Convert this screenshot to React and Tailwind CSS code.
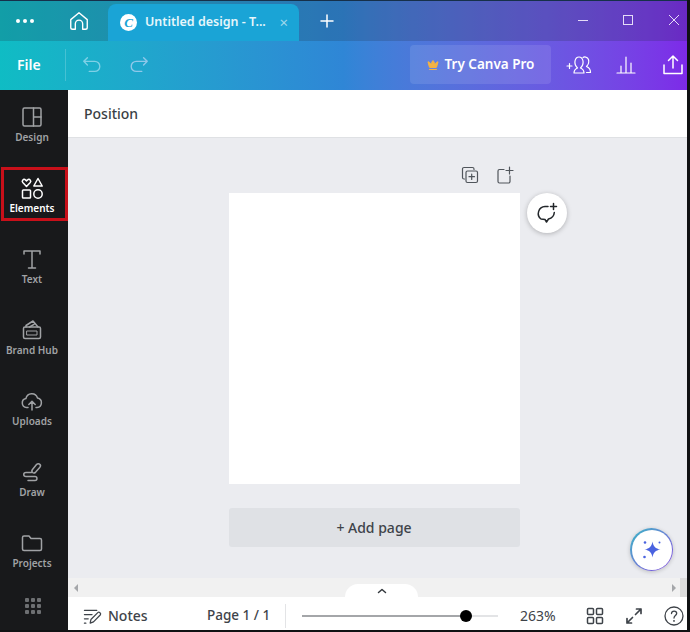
import React from 'react';
import { Crown } from 'lucide-react';

const stroke = { fill: 'none', stroke: 'currentColor', strokeWidth: 1.5, strokeLinecap: 'round', strokeLinejoin: 'round' };

const SIDE_ITEMS = [
  {
    label: 'Design',
    icon: (
      <svg width="24" height="24" viewBox="0 0 24 24" {...stroke}>
        <rect x="3" y="3" width="18" height="18" rx="1.5" />
        <path d="M13.500 3v18M13.500 12H21" />
      </svg>
    ),
  },
  {
    label: 'Elements',
    active: true,
    icon: (
      <svg width="24" height="24" viewBox="0 0 24 24" {...stroke}>
        <path d="M6.500 10.500 2.800 6.600c-1.600-1.800.9-4.400 2.600-2.700l1.100 1 1.100-1c1.700-1.700 4.200.9 2.600 2.700z" />
        <path d="M18 2.500l4.200 7.500h-8.400z" />
        <rect x="2.500" y="14" width="8" height="8" rx="0.800" />
        <circle cx="18" cy="18" r="4.200" />
      </svg>
    ),
  },
  {
    label: 'Text',
    icon: (
      <svg width="24" height="24" viewBox="0 0 24 24" {...stroke}>
        <path d="M4 7V4h16v3M12 4v17M8.500 21h7" />
      </svg>
    ),
  },
  {
    label: 'Brand Hub',
    icon: (
      <svg width="24" height="24" viewBox="0 0 24 24" {...stroke}>
        <rect x="3.500" y="9" width="17" height="11.500" rx="1.500" />
        <path d="M6 9V7.500L13 3l5 6M9.500 9 14 6.300" />
        <path d="M7 13h10v4H7z" strokeWidth="1" />
      </svg>
    ),
  },
  {
    label: 'Uploads',
    icon: (
      <svg width="24" height="24" viewBox="0 0 24 24" {...stroke}>
        <path d="M8 18.500H6.500a4.500 4.500 0 0 1-.6-8.900 6 6 0 0 1 11.600-.6 4.800 4.800 0 0 1-.5 9.500H16" />
        <path d="M12 21v-8.500M8.800 15.500l3.200-3.200 3.200 3.200" />
      </svg>
    ),
  },
  {
    label: 'Draw',
    icon: (
      <svg width="24" height="24" viewBox="0 0 24 24" {...stroke}>
        <path d="M12.500 12.500c-1-1-.8-2 0-3l4-5c1-1 2.600-1 3.400-.1.900.9.600 2.200-.2 3.100l-4 4.600c-1 1-2.300 1.200-3.200.4z" />
        <path d="M11.500 12.500H6c-3 0-3 4 0 4h9c2.600 0 2.600 4 0 4H8" />
      </svg>
    ),
  },
  {
    label: 'Projects',
    icon: (
      <svg width="24" height="24" viewBox="0 0 24 24" {...stroke}>
        <path d="M2.500 6.500A1.500 1.500 0 0 1 4 5h5l2 2.500h9A1.500 1.500 0 0 1 21.500 9v9a1.500 1.500 0 0 1-1.500 1.500H4A1.500 1.500 0 0 1 2.500 18z" />
      </svg>
    ),
  },
];

function SideItem({ item }) {
  return (
    <div className={`relative flex h-[71px] shrink-0 flex-col items-center pr-[4px] pt-[15px] ${item.active ? 'text-white' : 'text-[#a0a2a5]'}`}>
      {item.active && <div className="absolute left-[1px] top-[6px] h-[54px] w-[67px] border-[3px] border-[#c8101a]" />}
      {item.icon}
      <span className="mt-[1px] whitespace-nowrap text-[10px] font-semibold leading-[14px]">{item.label}</span>
    </div>
  );
}

export default function App() {
  return (
    <div className="flex h-[632px] w-[690px] flex-col overflow-hidden border-r-[3px] border-b-[2px] border-[#101113] bg-white font-['Noto_Sans',sans-serif]">
      <div className="h-[1px] shrink-0 bg-[#16304a]" />

      {/* gradient header */}
      <div className="h-[89px] shrink-0 bg-gradient-to-r from-[#0fbcc4] via-[#2f86d6] to-[#7d2ae8] text-white">
        <div className="flex h-[40px] items-center bg-[#1f2937]/20">
          <div className="flex w-[49px] gap-[3px] pl-[16px]">
            <span className="h-[4px] w-[4px] rounded-full bg-white" />
            <span className="h-[4px] w-[4px] rounded-full bg-white" />
            <span className="h-[4px] w-[4px] rounded-full bg-white" />
          </div>
          <div className="flex w-[59px] justify-center">
            <svg width="22" height="22" viewBox="0 0 24 24" {...stroke}>
              <path d="M3 10.500 12 3l9 7.500V19a2 2 0 0 1-2 2h-3v-6a4 4 0 0 0-8 0v6H5a2 2 0 0 1-2-2z" />
            </svg>
          </div>
          <div className="flex h-[37px] w-[191px] items-center self-end rounded-t-[8px] bg-[#1aa4d6] pl-[12px]">
            <span className="flex h-[17px] w-[17px] shrink-0 items-center justify-center rounded-full bg-white font-['Liberation_Serif',serif] text-[13px] font-bold italic text-[#1aa4d6]">C</span>
            <span className="ml-[8px] whitespace-nowrap text-[12.5px] font-semibold text-[#e6f6fb]">Untitled design - T...</span>
            <span className="ml-auto mr-[11px] text-[15px] leading-none text-[#9fd8ec]">×</span>
          </div>
          <svg className="ml-[20px]" width="16" height="16" viewBox="0 0 16 16" {...stroke}>
            <path d="M8 2v12M2 8h12" />
          </svg>
          <div className="ml-auto flex items-center gap-[35px] pb-[2px] pr-[7px]">
            <span className="h-[1px] w-[10px] bg-[#e5dcf8]" />
            <span className="h-[10px] w-[10px] border border-[#e5dcf8]" />
            <svg width="12" height="12" viewBox="0 0 12 12" fill="none" stroke="#e5dcf8" strokeWidth="1">
              <path d="M1 1l10 10M11 1 1 11" />
            </svg>
          </div>
        </div>

        <div className="flex h-[49px] items-center pb-[2px]">
          <span className="ml-[17px] w-[24px] text-[14px] font-semibold">File</span>
          <div className="ml-[24px] h-[32px] w-[1px] bg-white/20" />
          <svg className="ml-[15px] text-[#7fd0e6]" width="22" height="22" viewBox="0 0 24 24" {...stroke}>
            <path d="M7 4 3 8l4 4M3 8h12a5.500 5.500 0 0 1 0 11H9" />
          </svg>
          <svg className="ml-[25px] text-[#8fc8ea]" width="22" height="22" viewBox="0 0 24 24" {...stroke}>
            <path d="M17 4l4 4-4 4M21 8H9a5.500 5.500 0 0 0 0 11h6" />
          </svg>
          <div className="ml-[260px] flex h-[39px] w-[141px] shrink-0 items-center justify-center gap-[6px] rounded-[4px] bg-white/10">
            <Crown size={12} fill="#f5b342" stroke="#f5b342" />
            <span className="whitespace-nowrap text-[13.5px] font-semibold">Try Canva Pro</span>
          </div>
          <svg className="ml-[15px] shrink-0" width="26" height="24" viewBox="0 0 26 24" {...stroke} strokeWidth="1.200">
            <path d="M1 13h5M3.500 10.500v5" />
            <path d="M8 20c0-3 1-4 3.500-5-2-2-3-4-2.500-7 .5-2.500 2-4 4-4s3.500 1.500 4 4c.5 3-.5 5-2.500 7 2.500 1 3.500 2 3.500 5z" />
            <path d="M17 4.500c1-.8 4.500-1 5.500 2 .7 2.500 0 5-2 7 2.500 1 4 2.500 4 6h-4" />
          </svg>
          <svg className="ml-[24px] shrink-0" width="20" height="20" viewBox="0 0 20 20" {...stroke} strokeWidth="1.200">
            <path d="M1 18h18M5 18v-7M10 18V2M15 18V8" />
          </svg>
          <svg className="ml-[27px] shrink-0" width="20" height="22" viewBox="0 0 20 22" {...stroke}>
            <path d="M10 14V2M5.500 6.500 10 2l4.500 4.500M1 11v8.500h18V11" />
          </svg>
        </div>
      </div>

      <div className="flex min-h-0 flex-1">
        {/* side nav */}
        <div className="flex w-[68px] shrink-0 flex-col items-stretch bg-[#18191b]">
          {SIDE_ITEMS.map((item) => (
            <SideItem key={item.label} item={item} />
          ))}
          <div className="-ml-[3px] grid w-fit grid-cols-3 gap-[2px] self-center pt-[11px]">
            {Array.from({ length: 9 }).map((_, i) => (
              <span key={i} className="h-[4px] w-[4px] rounded-[1px] bg-[#6d6f72]" />
            ))}
          </div>
        </div>

        <div className="flex min-w-0 flex-1 flex-col">
          <div className="flex h-[48px] shrink-0 items-center border-b border-[#dfe1e4] bg-white pl-[16px] text-[14px] font-medium text-[#3a3f45]">
            Position
          </div>

          {/* canvas */}
          <div className="relative flex min-h-0 flex-1 flex-col items-center bg-[#ebecf0] pr-[7px]">
            <div className="flex h-[55px] w-[291px] shrink-0 items-center justify-end gap-[17px] pr-[6px] pt-[19px] text-[#50555b]">
              <svg width="18" height="18" viewBox="0 0 18 18" {...stroke} strokeWidth="1.200">
                <path d="M3.500 13H3a1.500 1.500 0 0 1-1.500-1.500V3A1.500 1.500 0 0 1 3 1.500h8.500A1.500 1.500 0 0 1 13 3v.5" />
                <rect x="5" y="5" width="11.500" height="11.500" rx="1.500" />
                <path d="M10.700 8v5.500M8 10.700h5.500" />
              </svg>
              <svg width="18" height="18" viewBox="0 0 18 18" {...stroke} strokeWidth="1.200">
                <path d="M8 3.500H3.500A1.500 1.500 0 0 0 2 5v10.500A1.500 1.500 0 0 0 3.500 17h9a1.500 1.500 0 0 0 1.500-1.500V10" />
                <path d="M13.500 1v7M10 4.500h7" />
              </svg>
            </div>
            <div className="h-[291px] w-[291px] shrink-0 bg-white" />
            <div className="mt-[24px] flex h-[39px] w-[291px] shrink-0 items-center justify-center rounded-[3px] bg-[#dfe1e5] text-[14px] font-medium text-[#3e4349]">
              + Add page
            </div>

            <div className="absolute left-[459px] top-[55px] flex h-[40px] w-[40px] items-center justify-center rounded-full bg-white text-[#22262a] shadow-[0_1px_5px_rgba(0,0,0,0.25)]">
              <svg width="24" height="24" viewBox="0 0 24 24" {...stroke}>
                <path d="M13 5.500H10a7 7 0 0 0-4 12.500l4 .5 1.500 2.500 2-3c3-.8 5.500-3 5.800-6.500" />
                <path d="M18.500 2.500v6M15.500 5.500h6" />
              </svg>
            </div>
            <div className="absolute left-[562px] top-[390px] flex h-[43px] w-[43px] items-center justify-center rounded-full bg-gradient-to-br from-[#25b5c4] to-[#7d3de0] p-[1.500px] shadow-[0_1px_4px_rgba(0,0,0,0.2)]">
              <div className="flex h-full w-full items-center justify-center rounded-full bg-white">
                <svg width="24" height="24" viewBox="0 0 24 24" fill="#4a63e0">
                  <path d="M12.500 3.500c.8 5 3 7.200 8 8-5 .8-7.200 3-8 8-.8-5-3-7.200-8-8 5-.8 7.200-3 8-8z" />
                  <circle cx="5" cy="4.500" r="1.300" />
                  <circle cx="19.500" cy="4.500" r="1" />
                  <circle cx="4.500" cy="19" r="1.300" />
                </svg>
              </div>
            </div>
          </div>

          {/* horizontal scroll strip */}
          <div className="relative flex h-[19px] shrink-0 items-center justify-between bg-[#f1f1f1] pl-[6px] text-[#a5a7aa]">
            <span className="h-0 w-0 border-y-[4px] border-r-[4px] border-y-transparent border-r-current" />
            <div className="flex h-full items-center">
              <span className="h-0 w-0 border-y-[4px] border-l-[4px] border-y-transparent border-l-current" />
              <span className="ml-[4px] h-full w-[7px] bg-[#dcdcdc]" />
            </div>
            <div className="absolute bottom-0 left-[277px] flex h-[13px] w-[73px] items-center justify-center rounded-t-[16px] bg-white text-[#33383d]">
              <svg width="10" height="6" viewBox="0 0 10 6" {...stroke}>
                <path d="M1.500 4.500 5 1.500l3.500 3" />
              </svg>
            </div>
          </div>

          {/* footer */}
          <div className="flex h-[33px] shrink-0 items-center bg-white pt-[4px] text-[14px] text-[#3e4349]">
            <svg className="ml-[15px] shrink-0" width="20" height="18" viewBox="0 0 21 18" {...stroke} strokeWidth="1.300">
              <path d="M1.500 3h13M1.500 7.500h8M1.500 12h4M1.500 16.500h1.500" />
              <path d="M7.500 16.500l.8-3.800 7.500-7.500c1-1 3.500 1 2.500 2.500l-7.300 7.500z" />
            </svg>
            <span className="ml-[5px] w-[39px] font-medium">Notes</span>
            <span className="ml-[60px] w-[62px] whitespace-nowrap text-[13.5px] font-medium">Page 1 / 1</span>
            <div className="ml-[16px] h-[24px] w-[1px] bg-[#e3e4e6]" />
            <div className="ml-[16px] flex w-[196px] shrink-0 items-center">
              <div className="h-[2px] w-[164px] bg-[#a4a6a9]" />
              <span className="z-10 -mx-[6px] h-[12px] w-[12px] shrink-0 rounded-full bg-black" />
              <div className="h-[2px] flex-1 bg-[#e3e4e6]" />
            </div>
            <span className="ml-[22px] w-[37px]">263%</span>
            <svg className="ml-[29px] shrink-0" width="18" height="18" viewBox="0 0 18 18" {...stroke} strokeWidth="1.500">
              <rect x="1.500" y="1.500" width="6" height="6" rx="1" />
              <rect x="10.500" y="1.500" width="6" height="6" rx="1" />
              <rect x="1.500" y="10.500" width="6" height="6" rx="1" />
              <rect x="10.500" y="10.500" width="6" height="6" rx="1" />
            </svg>
            <svg className="ml-[21px] shrink-0" width="18" height="18" viewBox="0 0 18 18" {...stroke} strokeWidth="1.700">
              <path d="M10.500 7.500 16 2M11.500 2H16v4.500M7.500 10.500 2 16M2 11.500V16h4.500" />
            </svg>
            <svg className="ml-[21px] shrink-0" width="20" height="20" viewBox="0 0 20 20" {...stroke} strokeWidth="1.300">
              <circle cx="10" cy="10" r="9" />
              <path d="M7.500 7.500c.2-3.200 5-3.200 5.200-.2.100 2.200-2.700 2.400-2.700 4.700" />
              <path d="M10 14.800v.1" strokeWidth="1.800" />
            </svg>
          </div>
        </div>
      </div>
    </div>
  );
}
